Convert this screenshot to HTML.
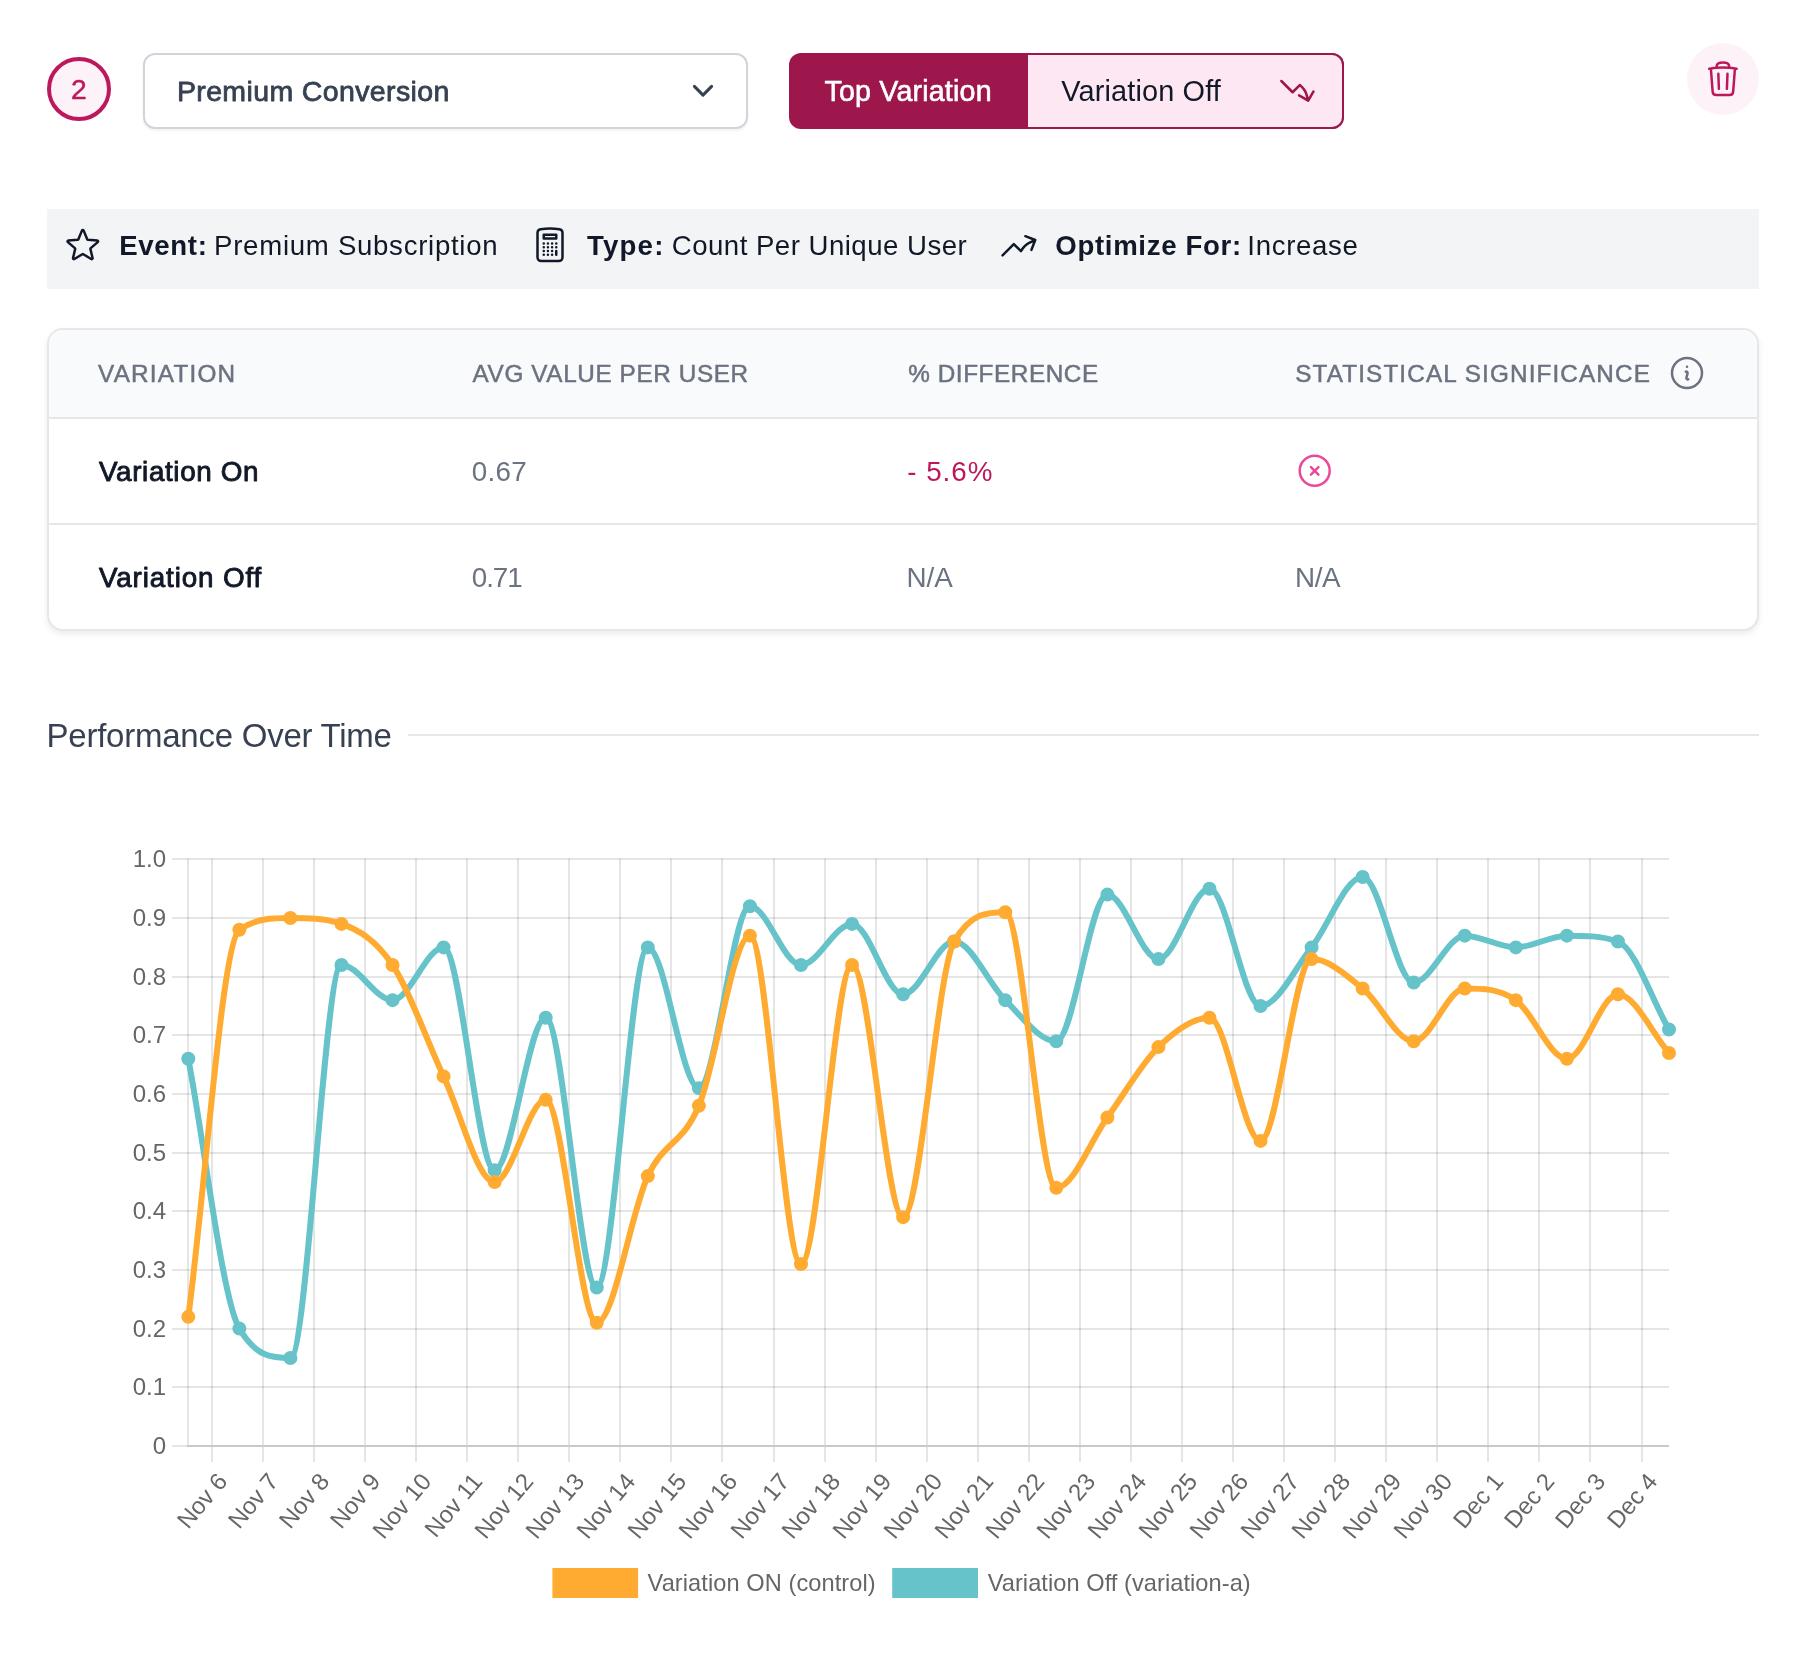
<!DOCTYPE html>
<html><head><meta charset="utf-8"><title>Metric</title>
<style>
html,body{margin:0;padding:0;background:#fff;}
body{width:1806px;height:1656px;position:relative;overflow:hidden;font-family:"Liberation Sans",sans-serif;}
.abs{position:absolute;box-sizing:border-box;}
svg text{font-family:"Liberation Sans",sans-serif;}
</style></head><body>
<div class="abs" style="left:47px;top:57px;width:64px;height:64px;border:4px solid #be185d;background:#fdf2f8;border-radius:50%"></div>
<div class="abs" style="left:143px;top:53px;width:605px;height:76px;border:2px solid #d1d5db;border-radius:12px;background:#fff;box-shadow:0 2px 3px rgba(0,0,0,0.05)"></div>
<div class="abs" style="left:789px;top:53px;width:555px;height:76px;border-radius:12px;background:#9d174d"></div>
<div class="abs" style="left:1028px;top:53px;width:316px;height:76px;border:2px solid #9d174d;border-left:none;border-radius:0 12px 12px 0;background:#fce7f3"></div>
<div class="abs" style="left:1687px;top:43px;width:72px;height:72px;border-radius:50%;background:#fdf2f8"></div>
<div class="abs" style="left:47px;top:209px;width:1712px;height:80px;background:#f3f4f6"></div>
<div class="abs" style="left:47px;top:328px;width:1712px;height:303px;border:2px solid #e5e7eb;border-radius:16px;background:#fff;box-shadow:0 3px 6px rgba(0,0,0,0.08);overflow:hidden">
  <div class="abs" style="left:0;top:0;width:100%;height:89px;background:#f9fafb;border-bottom:2px solid #e5e7eb"></div>
  <div class="abs" style="left:0;top:193px;width:100%;height:2px;background:#e5e7eb"></div>
</div>
<div class="abs" style="left:408px;top:734px;width:1351px;height:2px;background:#e5e7eb"></div>
<svg class="abs" style="left:0;top:0;will-change:transform" width="1806" height="1656" viewBox="0 0 1806 1656">
<line x1="172" y1="1446.00" x2="187.00" y2="1446.00" stroke="rgba(0,0,0,0.1)" stroke-width="2"/><text x="166" y="1453.60" font-size="24" fill="#666" text-anchor="end">0</text><line x1="172" y1="1387.00" x2="1669.0" y2="1387.00" stroke="rgba(0,0,0,0.1)" stroke-width="2"/><text x="166" y="1394.60" font-size="24" fill="#666" text-anchor="end">0.1</text><line x1="172" y1="1329.00" x2="1669.0" y2="1329.00" stroke="rgba(0,0,0,0.1)" stroke-width="2"/><text x="166" y="1336.60" font-size="24" fill="#666" text-anchor="end">0.2</text><line x1="172" y1="1270.00" x2="1669.0" y2="1270.00" stroke="rgba(0,0,0,0.1)" stroke-width="2"/><text x="166" y="1277.60" font-size="24" fill="#666" text-anchor="end">0.3</text><line x1="172" y1="1211.00" x2="1669.0" y2="1211.00" stroke="rgba(0,0,0,0.1)" stroke-width="2"/><text x="166" y="1218.60" font-size="24" fill="#666" text-anchor="end">0.4</text><line x1="172" y1="1153.00" x2="1669.0" y2="1153.00" stroke="rgba(0,0,0,0.1)" stroke-width="2"/><text x="166" y="1160.60" font-size="24" fill="#666" text-anchor="end">0.5</text><line x1="172" y1="1094.00" x2="1669.0" y2="1094.00" stroke="rgba(0,0,0,0.1)" stroke-width="2"/><text x="166" y="1101.60" font-size="24" fill="#666" text-anchor="end">0.6</text><line x1="172" y1="1035.00" x2="1669.0" y2="1035.00" stroke="rgba(0,0,0,0.1)" stroke-width="2"/><text x="166" y="1042.60" font-size="24" fill="#666" text-anchor="end">0.7</text><line x1="172" y1="977.00" x2="1669.0" y2="977.00" stroke="rgba(0,0,0,0.1)" stroke-width="2"/><text x="166" y="984.60" font-size="24" fill="#666" text-anchor="end">0.8</text><line x1="172" y1="918.00" x2="1669.0" y2="918.00" stroke="rgba(0,0,0,0.1)" stroke-width="2"/><text x="166" y="925.60" font-size="24" fill="#666" text-anchor="end">0.9</text><line x1="172" y1="859.00" x2="1669.0" y2="859.00" stroke="rgba(0,0,0,0.1)" stroke-width="2"/><text x="166" y="866.60" font-size="24" fill="#666" text-anchor="end">1.0</text><line x1="188" y1="858.40" x2="188" y2="1445.90" stroke="rgba(0,0,0,0.1)" stroke-width="2"/><line x1="212.00" y1="858.40" x2="212.00" y2="1461.90" stroke="rgba(0,0,0,0.1)" stroke-width="2"/><text transform="translate(222.00 1476.50) rotate(-50)" font-size="24" fill="#666" text-anchor="end" dominant-baseline="central">Nov 6</text><line x1="263.00" y1="858.40" x2="263.00" y2="1461.90" stroke="rgba(0,0,0,0.1)" stroke-width="2"/><text transform="translate(273.00 1476.50) rotate(-50)" font-size="24" fill="#666" text-anchor="end" dominant-baseline="central">Nov 7</text><line x1="314.00" y1="858.40" x2="314.00" y2="1461.90" stroke="rgba(0,0,0,0.1)" stroke-width="2"/><text transform="translate(324.00 1476.50) rotate(-50)" font-size="24" fill="#666" text-anchor="end" dominant-baseline="central">Nov 8</text><line x1="365.00" y1="858.40" x2="365.00" y2="1461.90" stroke="rgba(0,0,0,0.1)" stroke-width="2"/><text transform="translate(375.00 1476.50) rotate(-50)" font-size="24" fill="#666" text-anchor="end" dominant-baseline="central">Nov 9</text><line x1="416.00" y1="858.40" x2="416.00" y2="1461.90" stroke="rgba(0,0,0,0.1)" stroke-width="2"/><text transform="translate(426.00 1476.50) rotate(-50)" font-size="24" fill="#666" text-anchor="end" dominant-baseline="central">Nov 10</text><line x1="467.00" y1="858.40" x2="467.00" y2="1461.90" stroke="rgba(0,0,0,0.1)" stroke-width="2"/><text transform="translate(477.00 1476.50) rotate(-50)" font-size="24" fill="#666" text-anchor="end" dominant-baseline="central">Nov 11</text><line x1="518.00" y1="858.40" x2="518.00" y2="1461.90" stroke="rgba(0,0,0,0.1)" stroke-width="2"/><text transform="translate(528.00 1476.50) rotate(-50)" font-size="24" fill="#666" text-anchor="end" dominant-baseline="central">Nov 12</text><line x1="569.00" y1="858.40" x2="569.00" y2="1461.90" stroke="rgba(0,0,0,0.1)" stroke-width="2"/><text transform="translate(579.00 1476.50) rotate(-50)" font-size="24" fill="#666" text-anchor="end" dominant-baseline="central">Nov 13</text><line x1="620.00" y1="858.40" x2="620.00" y2="1461.90" stroke="rgba(0,0,0,0.1)" stroke-width="2"/><text transform="translate(630.00 1476.50) rotate(-50)" font-size="24" fill="#666" text-anchor="end" dominant-baseline="central">Nov 14</text><line x1="671.00" y1="858.40" x2="671.00" y2="1461.90" stroke="rgba(0,0,0,0.1)" stroke-width="2"/><text transform="translate(681.00 1476.50) rotate(-50)" font-size="24" fill="#666" text-anchor="end" dominant-baseline="central">Nov 15</text><line x1="722.00" y1="858.40" x2="722.00" y2="1461.90" stroke="rgba(0,0,0,0.1)" stroke-width="2"/><text transform="translate(732.00 1476.50) rotate(-50)" font-size="24" fill="#666" text-anchor="end" dominant-baseline="central">Nov 16</text><line x1="774.00" y1="858.40" x2="774.00" y2="1461.90" stroke="rgba(0,0,0,0.1)" stroke-width="2"/><text transform="translate(784.00 1476.50) rotate(-50)" font-size="24" fill="#666" text-anchor="end" dominant-baseline="central">Nov 17</text><line x1="825.00" y1="858.40" x2="825.00" y2="1461.90" stroke="rgba(0,0,0,0.1)" stroke-width="2"/><text transform="translate(835.00 1476.50) rotate(-50)" font-size="24" fill="#666" text-anchor="end" dominant-baseline="central">Nov 18</text><line x1="876.00" y1="858.40" x2="876.00" y2="1461.90" stroke="rgba(0,0,0,0.1)" stroke-width="2"/><text transform="translate(886.00 1476.50) rotate(-50)" font-size="24" fill="#666" text-anchor="end" dominant-baseline="central">Nov 19</text><line x1="927.00" y1="858.40" x2="927.00" y2="1461.90" stroke="rgba(0,0,0,0.1)" stroke-width="2"/><text transform="translate(937.00 1476.50) rotate(-50)" font-size="24" fill="#666" text-anchor="end" dominant-baseline="central">Nov 20</text><line x1="978.00" y1="858.40" x2="978.00" y2="1461.90" stroke="rgba(0,0,0,0.1)" stroke-width="2"/><text transform="translate(988.00 1476.50) rotate(-50)" font-size="24" fill="#666" text-anchor="end" dominant-baseline="central">Nov 21</text><line x1="1029.00" y1="858.40" x2="1029.00" y2="1461.90" stroke="rgba(0,0,0,0.1)" stroke-width="2"/><text transform="translate(1039.00 1476.50) rotate(-50)" font-size="24" fill="#666" text-anchor="end" dominant-baseline="central">Nov 22</text><line x1="1080.00" y1="858.40" x2="1080.00" y2="1461.90" stroke="rgba(0,0,0,0.1)" stroke-width="2"/><text transform="translate(1090.00 1476.50) rotate(-50)" font-size="24" fill="#666" text-anchor="end" dominant-baseline="central">Nov 23</text><line x1="1131.00" y1="858.40" x2="1131.00" y2="1461.90" stroke="rgba(0,0,0,0.1)" stroke-width="2"/><text transform="translate(1141.00 1476.50) rotate(-50)" font-size="24" fill="#666" text-anchor="end" dominant-baseline="central">Nov 24</text><line x1="1182.00" y1="858.40" x2="1182.00" y2="1461.90" stroke="rgba(0,0,0,0.1)" stroke-width="2"/><text transform="translate(1192.00 1476.50) rotate(-50)" font-size="24" fill="#666" text-anchor="end" dominant-baseline="central">Nov 25</text><line x1="1233.00" y1="858.40" x2="1233.00" y2="1461.90" stroke="rgba(0,0,0,0.1)" stroke-width="2"/><text transform="translate(1243.00 1476.50) rotate(-50)" font-size="24" fill="#666" text-anchor="end" dominant-baseline="central">Nov 26</text><line x1="1284.00" y1="858.40" x2="1284.00" y2="1461.90" stroke="rgba(0,0,0,0.1)" stroke-width="2"/><text transform="translate(1294.00 1476.50) rotate(-50)" font-size="24" fill="#666" text-anchor="end" dominant-baseline="central">Nov 27</text><line x1="1335.00" y1="858.40" x2="1335.00" y2="1461.90" stroke="rgba(0,0,0,0.1)" stroke-width="2"/><text transform="translate(1345.00 1476.50) rotate(-50)" font-size="24" fill="#666" text-anchor="end" dominant-baseline="central">Nov 28</text><line x1="1386.00" y1="858.40" x2="1386.00" y2="1461.90" stroke="rgba(0,0,0,0.1)" stroke-width="2"/><text transform="translate(1396.00 1476.50) rotate(-50)" font-size="24" fill="#666" text-anchor="end" dominant-baseline="central">Nov 29</text><line x1="1437.00" y1="858.40" x2="1437.00" y2="1461.90" stroke="rgba(0,0,0,0.1)" stroke-width="2"/><text transform="translate(1447.00 1476.50) rotate(-50)" font-size="24" fill="#666" text-anchor="end" dominant-baseline="central">Nov 30</text><line x1="1488.00" y1="858.40" x2="1488.00" y2="1461.90" stroke="rgba(0,0,0,0.1)" stroke-width="2"/><text transform="translate(1498.00 1476.50) rotate(-50)" font-size="24" fill="#666" text-anchor="end" dominant-baseline="central">Dec 1</text><line x1="1539.00" y1="858.40" x2="1539.00" y2="1461.90" stroke="rgba(0,0,0,0.1)" stroke-width="2"/><text transform="translate(1549.00 1476.50) rotate(-50)" font-size="24" fill="#666" text-anchor="end" dominant-baseline="central">Dec 2</text><line x1="1590.00" y1="858.40" x2="1590.00" y2="1461.90" stroke="rgba(0,0,0,0.1)" stroke-width="2"/><text transform="translate(1600.00 1476.50) rotate(-50)" font-size="24" fill="#666" text-anchor="end" dominant-baseline="central">Dec 3</text><line x1="1642.00" y1="858.40" x2="1642.00" y2="1461.90" stroke="rgba(0,0,0,0.1)" stroke-width="2"/><text transform="translate(1652.00 1476.50) rotate(-50)" font-size="24" fill="#666" text-anchor="end" dominant-baseline="central">Dec 4</text><line x1="187" y1="1446.00" x2="1669.0" y2="1446.00" stroke="#c9c9c9" stroke-width="2"/><path d="M188.30 1058.81C205.32 1148.74 222.34 1299.28 239.36 1328.60C256.38 1357.93 273.40 1357.93 290.42 1357.93C307.44 1357.93 324.46 964.97 341.48 964.97C358.50 964.97 375.51 1000.16 392.53 1000.16C409.55 1000.16 426.57 947.38 443.59 947.38C460.61 947.38 477.63 1170.25 494.65 1170.25C511.67 1170.25 528.69 1017.75 545.71 1017.75C562.73 1017.75 579.75 1287.55 596.77 1287.55C613.79 1287.55 630.81 947.38 647.83 947.38C664.85 947.38 681.87 1088.13 698.89 1088.13C715.91 1088.13 732.93 906.32 749.94 906.32C766.96 906.32 783.98 964.97 801.00 964.97C818.02 964.97 835.04 923.91 852.06 923.91C869.08 923.91 886.10 994.30 903.12 994.30C920.14 994.30 937.16 941.51 954.18 941.51C971.20 941.51 988.22 983.54 1005.24 1000.16C1022.26 1016.78 1039.28 1041.22 1056.30 1041.22C1073.32 1041.22 1090.34 894.59 1107.36 894.59C1124.37 894.59 1141.39 959.11 1158.41 959.11C1175.43 959.11 1192.45 888.73 1209.47 888.73C1226.49 888.73 1243.51 1006.02 1260.53 1006.02C1277.55 1006.02 1294.57 968.88 1311.59 947.38C1328.61 925.87 1345.63 877.00 1362.65 877.00C1379.67 877.00 1396.69 982.57 1413.71 982.57C1430.73 982.57 1447.75 935.64 1464.77 935.64C1481.79 935.64 1498.80 947.38 1515.82 947.38C1532.84 947.38 1549.86 935.64 1566.88 935.64C1583.90 935.64 1600.92 935.64 1617.94 941.51C1634.96 947.38 1651.98 1000.16 1669.00 1029.49" fill="none" stroke="#65c3c9" stroke-width="6"/><g fill="#65c3c9" stroke="#65c3c9" stroke-width="2"><circle cx="188.30" cy="1058.81" r="6"/><circle cx="239.36" cy="1328.60" r="6"/><circle cx="290.42" cy="1357.93" r="6"/><circle cx="341.48" cy="964.97" r="6"/><circle cx="392.53" cy="1000.16" r="6"/><circle cx="443.59" cy="947.38" r="6"/><circle cx="494.65" cy="1170.25" r="6"/><circle cx="545.71" cy="1017.75" r="6"/><circle cx="596.77" cy="1287.55" r="6"/><circle cx="647.83" cy="947.38" r="6"/><circle cx="698.89" cy="1088.13" r="6"/><circle cx="749.94" cy="906.32" r="6"/><circle cx="801.00" cy="964.97" r="6"/><circle cx="852.06" cy="923.91" r="6"/><circle cx="903.12" cy="994.30" r="6"/><circle cx="954.18" cy="941.51" r="6"/><circle cx="1005.24" cy="1000.16" r="6"/><circle cx="1056.30" cy="1041.22" r="6"/><circle cx="1107.36" cy="894.59" r="6"/><circle cx="1158.41" cy="959.11" r="6"/><circle cx="1209.47" cy="888.73" r="6"/><circle cx="1260.53" cy="1006.02" r="6"/><circle cx="1311.59" cy="947.38" r="6"/><circle cx="1362.65" cy="877.00" r="6"/><circle cx="1413.71" cy="982.57" r="6"/><circle cx="1464.77" cy="935.64" r="6"/><circle cx="1515.82" cy="947.38" r="6"/><circle cx="1566.88" cy="935.64" r="6"/><circle cx="1617.94" cy="941.51" r="6"/><circle cx="1669.00" cy="1029.49" r="6"/></g><path d="M188.30 1316.87C205.32 1187.84 222.34 941.51 239.36 929.78C256.38 918.05 273.40 918.05 290.42 918.05C307.44 918.05 324.46 918.05 341.48 923.91C358.50 929.78 375.51 939.56 392.53 964.97C409.55 990.38 426.57 1040.24 443.59 1076.40C460.61 1112.57 477.63 1181.97 494.65 1181.97C511.67 1181.97 528.69 1099.87 545.71 1099.87C562.73 1099.87 579.75 1322.74 596.77 1322.74C613.79 1322.74 630.81 1212.28 647.83 1176.11C664.85 1139.94 681.87 1145.81 698.89 1105.73C715.91 1065.65 732.93 935.64 749.94 935.64C766.96 935.64 783.98 1264.09 801.00 1264.09C818.02 1264.09 835.04 964.97 852.06 964.97C869.08 964.97 886.10 1217.16 903.12 1217.16C920.14 1217.16 937.16 970.84 954.18 941.51C971.20 912.18 988.22 912.18 1005.24 912.18C1022.26 912.18 1039.28 1187.84 1056.30 1187.84C1073.32 1187.84 1090.34 1140.92 1107.36 1117.46C1124.37 1094.00 1141.39 1063.70 1158.41 1047.08C1175.43 1030.46 1192.45 1017.75 1209.47 1017.75C1226.49 1017.75 1243.51 1140.92 1260.53 1140.92C1277.55 1140.92 1294.57 959.11 1311.59 959.11C1328.61 959.11 1345.63 974.75 1362.65 988.43C1379.67 1002.12 1396.69 1041.22 1413.71 1041.22C1430.73 1041.22 1447.75 988.43 1464.77 988.43C1481.79 988.43 1498.80 988.43 1515.82 1000.16C1532.84 1011.89 1549.86 1058.81 1566.88 1058.81C1583.90 1058.81 1600.92 994.30 1617.94 994.30C1634.96 994.30 1651.98 1033.39 1669.00 1052.94" fill="none" stroke="#ffab31" stroke-width="6"/><g fill="#ffab31" stroke="#ffab31" stroke-width="2"><circle cx="188.30" cy="1316.87" r="6"/><circle cx="239.36" cy="929.78" r="6"/><circle cx="290.42" cy="918.05" r="6"/><circle cx="341.48" cy="923.91" r="6"/><circle cx="392.53" cy="964.97" r="6"/><circle cx="443.59" cy="1076.40" r="6"/><circle cx="494.65" cy="1181.97" r="6"/><circle cx="545.71" cy="1099.87" r="6"/><circle cx="596.77" cy="1322.74" r="6"/><circle cx="647.83" cy="1176.11" r="6"/><circle cx="698.89" cy="1105.73" r="6"/><circle cx="749.94" cy="935.64" r="6"/><circle cx="801.00" cy="1264.09" r="6"/><circle cx="852.06" cy="964.97" r="6"/><circle cx="903.12" cy="1217.16" r="6"/><circle cx="954.18" cy="941.51" r="6"/><circle cx="1005.24" cy="912.18" r="6"/><circle cx="1056.30" cy="1187.84" r="6"/><circle cx="1107.36" cy="1117.46" r="6"/><circle cx="1158.41" cy="1047.08" r="6"/><circle cx="1209.47" cy="1017.75" r="6"/><circle cx="1260.53" cy="1140.92" r="6"/><circle cx="1311.59" cy="959.11" r="6"/><circle cx="1362.65" cy="988.43" r="6"/><circle cx="1413.71" cy="1041.22" r="6"/><circle cx="1464.77" cy="988.43" r="6"/><circle cx="1515.82" cy="1000.16" r="6"/><circle cx="1566.88" cy="1058.81" r="6"/><circle cx="1617.94" cy="994.30" r="6"/><circle cx="1669.00" cy="1052.94" r="6"/></g><rect x="552.4" y="1568" width="85.7" height="30" fill="#ffab31"/><rect x="892.2" y="1568" width="85.8" height="30" fill="#65c3c9"/><text x="647.60" y="1591.30" font-size="23.6" font-weight="normal" fill="#666" letter-spacing="0.076">Variation ON (control)</text><text x="987.70" y="1591.30" font-size="23.6" font-weight="normal" fill="#666" letter-spacing="0.062">Variation Off (variation-a)</text>
<text x="71.10" y="99.00" font-size="28.2" font-weight="normal" fill="#be185d" stroke="#be185d" stroke-width="0.5" stroke-linejoin="round" letter-spacing="5.600">2</text><text x="176.90" y="100.90" font-size="28.5" font-weight="normal" fill="#374151" stroke="#374151" stroke-width="0.8" stroke-linejoin="round" letter-spacing="0.376">Premium Conversion</text><text x="824.40" y="101.10" font-size="28.6" font-weight="normal" fill="#ffffff" stroke="#ffffff" stroke-width="0.6" stroke-linejoin="round" letter-spacing="0.200">Top Variation</text><text x="1061.30" y="101.10" font-size="28.9" font-weight="normal" fill="#111827" letter-spacing="0.133">Variation Off</text><text x="119.30" y="254.80" font-size="27.6" font-weight="bold" fill="#111827" letter-spacing="0.640">Event:</text><text x="214.10" y="254.80" font-size="27.6" font-weight="normal" fill="#111827" letter-spacing="0.716">Premium Subscription</text><text x="587.00" y="254.90" font-size="27.6" font-weight="bold" fill="#111827" letter-spacing="1.200">Type:</text><text x="671.80" y="254.90" font-size="27.6" font-weight="normal" fill="#111827" letter-spacing="0.480">Count Per Unique User</text><text x="1055.30" y="254.90" font-size="27.6" font-weight="bold" fill="#111827" letter-spacing="0.667">Optimize For:</text><text x="1247.30" y="254.90" font-size="27.6" font-weight="normal" fill="#111827" letter-spacing="0.686">Increase</text><text x="98.10" y="381.90" font-size="24.3" font-weight="normal" fill="#6b7280" stroke="#6b7280" stroke-width="0.5" stroke-linejoin="round" letter-spacing="1.200">VARIATION</text><text x="472.60" y="381.90" font-size="24.3" font-weight="normal" fill="#6b7280" stroke="#6b7280" stroke-width="0.5" stroke-linejoin="round" letter-spacing="0.612">AVG VALUE PER USER</text><text x="908.20" y="381.90" font-size="24.3" font-weight="normal" fill="#6b7280" stroke="#6b7280" stroke-width="0.5" stroke-linejoin="round" letter-spacing="0.582">% DIFFERENCE</text><text x="1295.30" y="381.90" font-size="24.3" font-weight="normal" fill="#6b7280" stroke="#6b7280" stroke-width="0.5" stroke-linejoin="round" letter-spacing="1.113">STATISTICAL SIGNIFICANCE</text><text x="98.90" y="481.20" font-size="27.8" font-weight="normal" fill="#111827" stroke="#111827" stroke-width="0.9" stroke-linejoin="round" letter-spacing="0.655">Variation On</text><text x="471.80" y="481.20" font-size="27.8" font-weight="normal" fill="#6b7280" letter-spacing="0.267">0.67</text><text x="907.30" y="481.20" font-size="27.8" font-weight="normal" fill="#be185d" letter-spacing="0.960">- 5.6%</text><text x="98.90" y="587.00" font-size="27.8" font-weight="normal" fill="#111827" stroke="#111827" stroke-width="0.9" stroke-linejoin="round" letter-spacing="0.867">Variation Off</text><text x="471.80" y="587.00" font-size="27.8" font-weight="normal" fill="#6b7280" letter-spacing="-1.067">0.71</text><text x="906.50" y="587.00" font-size="27.8" font-weight="normal" fill="#6b7280" letter-spacing="0.000">N/A</text><text x="1295.00" y="587.00" font-size="27.8" font-weight="normal" fill="#6b7280" letter-spacing="-0.400">N/A</text><text x="46.50" y="747.00" font-size="33.0" font-weight="normal" fill="#374151" letter-spacing="-0.240">Performance Over Time</text><path d="M694.4 86.4 L703 95.1 L711.6 86.4" fill="none" stroke="#374151" stroke-width="3" stroke-linecap="round" stroke-linejoin="round"/><g transform="translate(1277.60 71.00) scale(1.6667)"><path d="M2.25 6 9 12.75l4.286-4.286a11.948 11.948 0 0 1 4.306 6.43l.776 2.898m0 0 3.182-5.511m-3.182 5.51-5.511-3.181" fill="none" stroke="#9d174d" stroke-width="1.5" stroke-linecap="round" stroke-linejoin="round"/></g><g transform="translate(1702.90 58.85) scale(1.6667)"><path d="m14.74 9-.346 9m-4.788 0L9.26 9m9.968-3.21c.342.052.682.107 1.022.166m-1.022-.165L18.16 19.673a2.25 2.25 0 0 1-2.244 2.077H8.084a2.25 2.25 0 0 1-2.244-2.077L4.772 5.79m14.456 0a48.108 48.108 0 0 0-3.478-.397m-12 .562c.34-.059.68-.114 1.022-.165m0 0a48.11 48.11 0 0 1 3.478-.397m7.5 0v-.916c0-1.18-.91-2.164-2.09-2.201a51.964 51.964 0 0 0-3.32 0c-1.18.037-2.09 1.022-2.09 2.201v.916m7.5 0a48.667 48.667 0 0 0-7.5 0" fill="none" stroke="#be185d" stroke-width="1.5" stroke-linecap="round" stroke-linejoin="round"/></g><g transform="translate(62.80 224.80) scale(1.6667)"><path d="M11.48 3.499a.562.562 0 0 1 1.04 0l2.125 5.111a.563.563 0 0 0 .475.345l5.518.442c.499.04.701.663.321.988l-4.204 3.602a.563.563 0 0 0-.182.557l1.285 5.385a.562.562 0 0 1-.84.61l-4.725-2.885a.562.562 0 0 0-.586 0L6.982 20.54a.562.562 0 0 1-.84-.61l1.285-5.386a.562.562 0 0 0-.182-.557l-4.204-3.602a.562.562 0 0 1 .321-.988l5.518-.442a.563.563 0 0 0 .475-.345L11.48 3.5Z" fill="none" stroke="#111827" stroke-width="1.5" stroke-linecap="round" stroke-linejoin="round"/></g><g transform="translate(530.00 224.85) scale(1.6667)"><path d="M15.75 15.75V18m-7.5-6.75h.008v.008H8.25v-.008Zm0 2.25h.008v.008H8.25V13.5Zm0 2.25h.008v.008H8.25v-.008Zm0 2.25h.008v.008H8.25V18Zm2.498-6.75h.007v.008h-.007v-.008Zm0 2.25h.007v.008h-.007V13.5Zm0 2.25h.007v.008h-.007v-.008Zm0 2.25h.007v.008h-.007V18Zm2.504-6.75h.008v.008h-.008v-.008Zm0 2.25h.008v.008h-.008V13.5Zm0 2.25h.008v.008h-.008v-.008Zm0 2.25h.008v.008h-.008V18Zm2.498-6.75h.008v.008h-.008v-.008Zm0 2.25h.008v.008h-.008V13.5ZM8.25 6h7.5v2.25h-7.5V6ZM12 2.25c-1.892 0-3.758.11-5.593.322C5.307 2.7 4.5 3.65 4.5 4.757V19.5a2.25 2.25 0 0 0 2.25 2.25h10.5a2.25 2.25 0 0 0 2.25-2.25V4.757c0-1.108-.806-2.057-1.907-2.185A48.507 48.507 0 0 0 12 2.25Z" fill="none" stroke="#111827" stroke-width="1.5" stroke-linecap="round" stroke-linejoin="round"/></g><g transform="translate(998.80 225.30) scale(1.6667)"><path d="M2.25 18 9 11.25l4.306 4.306a11.95 11.95 0 0 1 5.814-5.518l2.74-1.22m0 0-5.94-2.281m5.94 2.28-2.28 5.941" fill="none" stroke="#111827" stroke-width="1.5" stroke-linecap="round" stroke-linejoin="round"/></g><g transform="translate(1667.00 353.00) scale(1.6667)"><path d="m11.25 11.25.041-.02a.75.75 0 0 1 1.063.852l-.708 2.836a.75.75 0 0 0 1.063.853l.041-.021M21 12a9 9 0 1 1-18 0 9 9 0 0 1 18 0Zm-9-3.75h.008v.008H12V8.25Z" fill="none" stroke="#6b7280" stroke-width="1.5" stroke-linecap="round" stroke-linejoin="round"/></g><g transform="translate(1294.70 450.80) scale(1.6667)"><path d="m9.75 9.75 4.5 4.5m0-4.5-4.5 4.5M21 12a9 9 0 1 1-18 0 9 9 0 0 1 18 0Z" fill="none" stroke="#ec4899" stroke-width="1.5" stroke-linecap="round" stroke-linejoin="round"/></g>
</svg>
</body></html>
